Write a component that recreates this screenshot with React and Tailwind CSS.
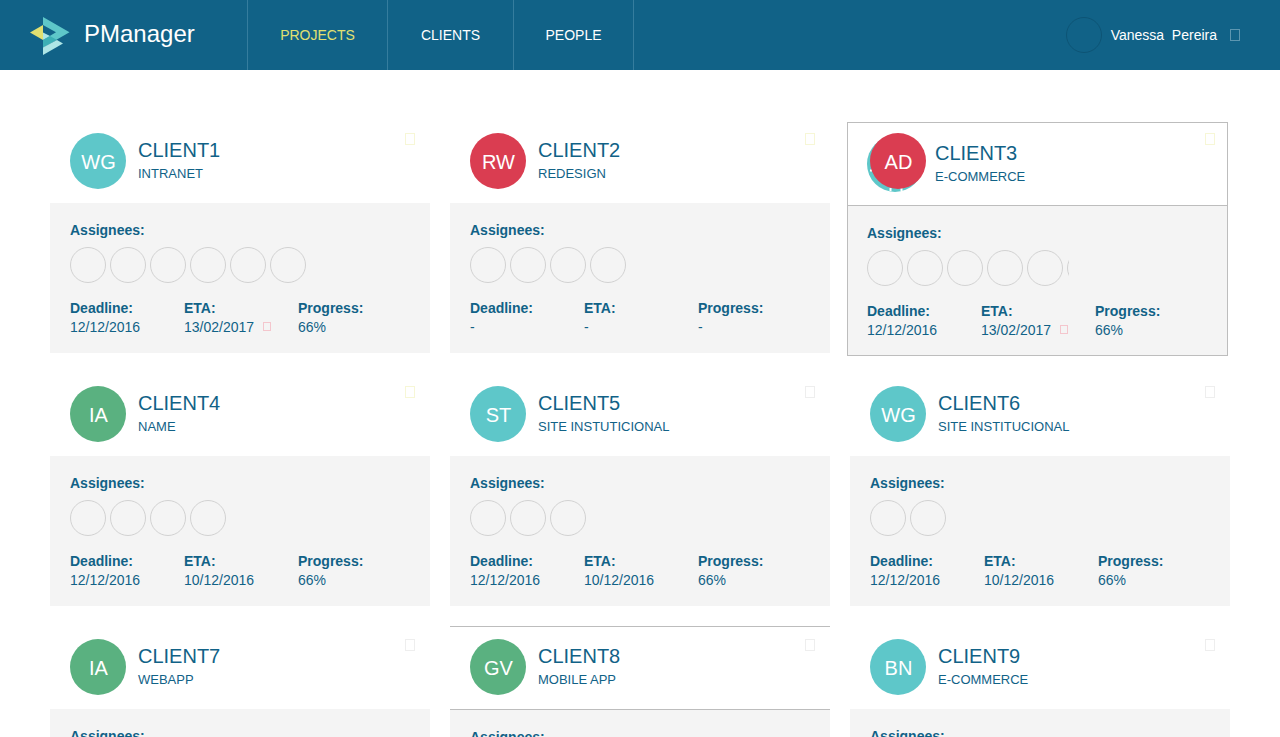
import React from "react";

const AVATAR = {
  teal: "bg-[#5ec7c9]",
  red: "bg-[#da3d51]",
  green: "bg-[#5ab180]",
};

const PROJECTS = [
  { client: "CLIENT1", name: "INTRANET", initials: "WG", color: "teal", starred: true, assignees: 6, deadline: "12/12/2016", eta: "13/02/2017", progress: "66%", late: true },
  { client: "CLIENT2", name: "REDESIGN", initials: "RW", color: "red", starred: true, assignees: 4, deadline: "-", eta: "-", progress: "-" },
  { client: "CLIENT3", name: "E-COMMERCE", initials: "AD", color: "red", starred: true, assignees: 6, deadline: "12/12/2016", eta: "13/02/2017", progress: "66%", late: true, variant: "active" },
  { client: "CLIENT4", name: "NAME", initials: "IA", color: "green", starred: true, assignees: 4, deadline: "12/12/2016", eta: "10/12/2016", progress: "66%" },
  { client: "CLIENT5", name: "SITE INSTUTICIONAL", initials: "ST", color: "teal", assignees: 3, deadline: "12/12/2016", eta: "10/12/2016", progress: "66%" },
  { client: "CLIENT6", name: "SITE INSTITUCIONAL", initials: "WG", color: "teal", assignees: 2, deadline: "12/12/2016", eta: "10/12/2016", progress: "66%" },
  { client: "CLIENT7", name: "WEBAPP", initials: "IA", color: "green", assignees: 4, deadline: "12/12/2016", eta: "10/12/2016", progress: "66%" },
  { client: "CLIENT8", name: "MOBILE APP", initials: "GV", color: "green", assignees: 3, deadline: "12/12/2016", eta: "10/12/2016", progress: "66%", variant: "lined" },
  { client: "CLIENT9", name: "E-COMMERCE", initials: "BN", color: "teal", assignees: 2, deadline: "12/12/2016", eta: "10/12/2016", progress: "66%" },
];

const CARD = {
  plain: { card: "", head: "h-[83px] px-5 pt-[13px]", star: "top-[13px] right-[15px]", body: "px-5 pb-4", people: "" },
  lined: { card: "", head: "h-[84px] border-y border-[#bdbdbd] px-5 pt-3", star: "top-3 right-[15px]", body: "px-5 pb-[15px]", people: "" },
  active: { card: "-mb-[3px] -ml-[3px] mr-[2px] mt-[2px] border border-[#bdbdbd]", head: "h-[83px] border-b border-[#bdbdbd] px-[19px] pt-[13px]", star: "top-[10px] right-3", body: "px-[19px] pb-[15px]", people: "w-[202px] overflow-hidden" },
};

function Logo() {
  return (
    <svg width="40" height="38" viewBox="0 0 40 38" aria-hidden="true">
      <path d="M0 15.5 13 8v15z" fill="#e1e071" />
      <path d="M13 0 39.500 15.300 13 30.500V23l13-7.700L13 8z" fill="#5ec7c9" />
      <path d="M13 15.500 20 19l-7 4z" fill="#aee6e6" />
      <path d="M13 23l7-4 7 4-14 7.500z" fill="#3cb0b5" />
      <path d="M13 30.500 27 23l6 3.500L13 38z" fill="#aee6e6" />
    </svg>
  );
}

function Avatar({ initials, color, stacked }) {
  const circle = "flex size-14 items-center justify-center rounded-full pt-px pl-px text-xl leading-6 text-white";
  if (!stacked) return <div className={`${circle} ${AVATAR[color]}`}>{initials}</div>;
  return (
    <div className="relative size-14 rounded-full bg-[#5ec7c9]">
      <svg className="block size-14" viewBox="0 0 56 56" aria-hidden="true">
        <path d="M3 34.500h2M23.500 52v3M34.500 52v3" stroke="#fff" strokeWidth="2" fill="none" />
      </svg>
      <div className={`absolute -top-[3px] left-[3px] ${circle} ${AVATAR[color]}`}>{initials}</div>
    </div>
  );
}

function Stat({ label, children }) {
  return (
    <div>
      <dt className="font-bold">{label}</dt>
      <dd className="flex items-center whitespace-nowrap">{children}</dd>
    </div>
  );
}

function ProjectCard({ project }) {
  const v = CARD[project.variant || "plain"];
  return (
    <article className={v.card}>
      <header className={`relative flex gap-3 ${v.head}`}>
        <Avatar initials={project.initials} color={project.color} stacked={project.variant === "active"} />
        <div className="pt-[5px]">
          <h2 className="text-xl leading-6">{project.client}</h2>
          <p className="mt-[2px] text-[13px] leading-5">{project.name}</p>
        </div>
        <button
          type="button"
          aria-label="Favourite"
          className={`absolute h-3 w-[10px] border ${project.starred ? "border-[#f7f7d6]" : "border-[#eeeeee]"} ${v.star}`}
        />
      </header>
      <div className={`bg-[#f4f4f4] pt-[18px] text-sm leading-[19px] ${v.body}`}>
        <h3 className="font-bold">Assignees:</h3>
        <ul className={`mt-[7px] flex gap-1 ${v.people}`}>
          {Array.from({ length: project.assignees }, (_, i) => (
            <li key={i} className="size-9 shrink-0 rounded-full border border-[#d2d2d2]" />
          ))}
        </ul>
        <dl className="mt-4 grid grid-cols-[114px_114px_1fr]">
          <Stat label="Deadline:">{project.deadline}</Stat>
          <Stat label="ETA:">
            {project.eta}
            {project.late && <span className="mb-[2px] ml-[9px] h-[9px] w-2 border border-[#f4c6cd]" />}
          </Stat>
          <Stat label="Progress:">{project.progress}</Stat>
        </dl>
      </div>
    </article>
  );
}

export default function App() {
  return (
    <div className="min-h-screen bg-white font-['Liberation_Sans',Arial,sans-serif] text-[#116287]">
      <header className="flex h-[70px] bg-[#116287] text-sm text-white">
        <a href="#home" className="flex w-[247px] items-center gap-[14px] pt-[2px] pl-[30px] text-2xl leading-8">
          <Logo />
          <span className="pb-1">PManager</span>
        </a>
        <nav className="flex border-l border-[#357d9e]">
          <a href="#projects" className="flex w-[140px] items-center justify-center border-r border-[#357d9e] text-[#e1e071]">PROJECTS</a>
          <a href="#clients" className="flex w-[126px] items-center justify-center border-r border-[#357d9e]">CLIENTS</a>
          <a href="#people" className="flex w-[120px] items-center justify-center border-r border-[#357d9e]">PEOPLE</a>
        </nav>
        <button type="button" className="ml-auto flex items-center pr-10">
          <span className="size-9 rounded-full border border-[#0d5475]" />
          <span className="ml-[9px] whitespace-pre">Vanessa  Pereira</span>
          <span className="ml-[13px] h-3 w-[10px] border border-[#5c96b0]" />
        </button>
      </header>
      <main className="grid grid-cols-3 items-start gap-5 px-[50px] py-[50px]">
        {PROJECTS.map((project) => (
          <ProjectCard key={project.client} project={project} />
        ))}
      </main>
    </div>
  );
}
